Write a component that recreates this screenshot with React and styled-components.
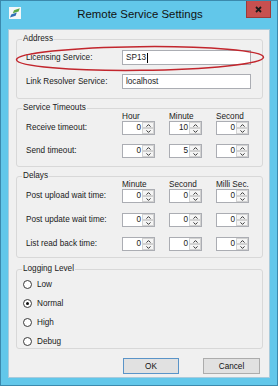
import React from "react";
import styled, { createGlobalStyle } from "styled-components";

const GlobalStyle = createGlobalStyle`
  html, body {
    margin: 0;
    padding: 0;
    background: #ffffff;
  }
  body {
    font-family: "Liberation Sans", Arial, sans-serif;
    color: #1a1a1a;
  }
`;

const Window = styled.div`
  width: 278px;
  height: 386px;
  box-sizing: border-box;
  border: 1px solid #3b89ad;
  background: #62c7ea;
  display: flex;
  flex-direction: column;
  padding: 0 7px 7px;
`;

const TitleBar = styled.div`
  height: 28px;
  flex-shrink: 0;
  margin: 0 -7px;
  padding: 0 6px 0 8px;
  display: grid;
  grid-template-columns: 1fr auto 1fr;
  align-items: start;
`;

const AppIcon = styled.svg`
  margin-top: 6px;
  display: block;
`;

const Title = styled.div`
  margin-top: 6px;
  font-size: 11.4px;
  line-height: 14px;
  color: #111;
  white-space: nowrap;
`;

const CloseButton = styled.div`
  justify-self: end;
  width: 25px;
  height: 17px;
  box-sizing: border-box;
  background: #c75050;
  border: 1px solid #9c3a3a;
  border-top: none;
  display: flex;
  align-items: center;
  justify-content: center;
`;

const Client = styled.div`
  position: relative;
  flex: 1;
  background: #f0f0f0;
  border: 1px solid #a9cbdc;
  padding: 4px 6px 3px 7px;
  display: flex;
  flex-direction: column;
`;

const Group = styled.fieldset`
  margin: ${(p) => p.$top || 0}px 0 0;
  padding: 0;
  border: 1px solid #d8d8d8;
  border-radius: 3px;
  min-width: 0;
`;

const Legend = styled.legend`
  margin-left: 5px;
  padding: 0 1px;
  font-size: 8.2px;
  line-height: 10px;
  color: #1a1a1a;
`;

const GroupBody = styled.div`
  padding: ${(p) => p.$pad};
`;

const FieldGrid = styled.div`
  display: grid;
  grid-template-columns: 96px 1fr;
  row-gap: 9px;
  align-items: center;
`;

const Label = styled.span`
  font-size: 8.2px;
  line-height: 10px;
  white-space: nowrap;
`;

const TextBox = styled.div`
  height: 15px;
  box-sizing: border-box;
  border: 1px solid #abadb3;
  background: #ffffff;
  padding: 0 3px;
  font-size: 8.2px;
  display: flex;
  align-items: center;
`;

const Caret = styled.span`
  width: 1px;
  height: 10px;
  background: #000;
  margin-left: 1px;
`;

const HeaderGrid = styled.div`
  display: grid;
  grid-template-columns: 82px repeat(3, 33px);
  column-gap: 14px;
  height: 8px;
  font-size: 8.2px;
  line-height: 8px;
  white-space: nowrap;
`;

const SpinGrid = styled.div`
  display: grid;
  grid-template-columns: 82px repeat(3, 33px);
  column-gap: 14px;
  row-gap: ${(p) => p.$gap}px;
  align-items: center;
`;

const Spin = styled.div`
  height: 14px;
  box-sizing: border-box;
  border: 1px solid #abadb3;
  background: #ffffff;
  display: flex;
`;

const SpinValue = styled.span`
  flex: 1;
  text-align: right;
  padding-right: 1px;
  font-size: 8.2px;
  line-height: 12px;
`;

const SpinButtons = styled.div`
  width: 12px;
  display: flex;
  flex-direction: column;
`;

const SpinButton = styled.div`
  flex: 1;
  box-sizing: border-box;
  border: 1px solid #d2d2d2;
  background: #f5f5f5;
  display: flex;
  align-items: center;
  justify-content: center;
`;

const RadioList = styled.div`
  display: flex;
  flex-direction: column;
  gap: 7px;
`;

const RadioRow = styled.div`
  height: 12px;
  display: flex;
  align-items: center;
  gap: 5px;
  font-size: 8.2px;
`;

const RadioDot = styled.span`
  width: 9px;
  height: 9px;
  box-sizing: border-box;
  border-radius: 50%;
  border: 1px solid #3a3a3a;
  background: #ffffff;
  display: flex;
  align-items: center;
  justify-content: center;

  &::after {
    content: "";
    width: 3px;
    height: 3px;
    border-radius: 50%;
    background: ${(p) => (p.$on ? "#111" : "transparent")};
  }
`;

const ButtonRow = styled.div`
  display: flex;
  justify-content: flex-end;
  gap: 24px;
  margin-top: 9px;
  padding-right: 3px;
`;

const Button = styled.button`
  width: ${(p) => p.$w}px;
  height: 16px;
  box-sizing: border-box;
  margin: 0;
  padding: 0;
  border: 1px solid ${(p) => (p.$primary ? "#5a94c8" : "#acacac")};
  background: #e1e1e1;
  font-family: inherit;
  font-size: 8.2px;
  color: #111;
`;

const Annotation = styled.svg`
  position: absolute;
  left: 6px;
  top: 15px;
  pointer-events: none;
`;

function Chevron({ up }) {
  return (
    <svg width="5" height="3" viewBox="0 0 5 3">
      <path
        d={up ? "M0.5 2.6 L2.5 0.6 L4.5 2.6" : "M0.5 0.4 L2.5 2.4 L4.5 0.4"}
        fill="none"
        stroke="#333"
        strokeWidth="1"
      />
    </svg>
  );
}

function SpinBox({ value }) {
  return (
    <Spin>
      <SpinValue>{value}</SpinValue>
      <SpinButtons>
        <SpinButton>
          <Chevron up />
        </SpinButton>
        <SpinButton>
          <Chevron />
        </SpinButton>
      </SpinButtons>
    </Spin>
  );
}

const timeouts = [
  { label: "Receive timeout:", values: [0, 10, 0] },
  { label: "Send timeout:", values: [0, 5, 0] },
];

const delays = [
  { label: "Post upload wait time:", values: [0, 0, 0] },
  { label: "Post update wait time:", values: [0, 0, 0] },
  { label: "List read back time:", values: [0, 0, 0] },
];

const levels = ["Low", "Normal", "High", "Debug"];

export default function App() {
  return (
    <>
      <GlobalStyle />
      <Window>
        <TitleBar>
          <AppIcon width="12" height="12" viewBox="0 0 12 12">
            <rect width="12" height="12" fill="#f3f7f9" />
            <path d="M5 3.2 L10.8 1.2 L9.6 4.4 L3.8 6.2 Z" fill="#5aa845" />
            <path d="M2.2 7.4 L7.8 5.6 L6.6 8.8 L1 10.6 Z" fill="#2f6fb5" />
          </AppIcon>
          <Title>Remote Service Settings</Title>
          <CloseButton>
            <svg width="7" height="7" viewBox="0 0 7 7">
              <path d="M1 1 L6 6 M6 1 L1 6" stroke="#1a1a1a" strokeWidth="1.8" />
            </svg>
          </CloseButton>
        </TitleBar>

        <Client>
          <Group>
            <Legend>Address</Legend>
            <GroupBody $pad="6px 11px 9px 9px">
              <FieldGrid>
                <Label>Licensing Service:</Label>
                <TextBox>
                  SP13
                  <Caret />
                </TextBox>
                <Label>Link Resolver Service:</Label>
                <TextBox>localhost</TextBox>
              </FieldGrid>
            </GroupBody>
          </Group>

          <Group $top={4}>
            <Legend>Service Timeouts</Legend>
            <GroupBody $pad="0 11px 8px 9px">
              <HeaderGrid>
                <span />
                <span>Hour</span>
                <span>Minute</span>
                <span>Second</span>
              </HeaderGrid>
              <SpinGrid $gap={9}>
                {timeouts.map((row) => (
                  <React.Fragment key={row.label}>
                    <Label>{row.label}</Label>
                    {row.values.map((v, i) => (
                      <SpinBox key={i} value={v} />
                    ))}
                  </React.Fragment>
                ))}
              </SpinGrid>
            </GroupBody>
          </Group>

          <Group $top={4}>
            <Legend>Delays</Legend>
            <GroupBody $pad="0 11px 6px 9px">
              <HeaderGrid>
                <span />
                <span>Minute</span>
                <span>Second</span>
                <span>Milli Sec.</span>
              </HeaderGrid>
              <SpinGrid $gap={10}>
                {delays.map((row) => (
                  <React.Fragment key={row.label}>
                    <Label>{row.label}</Label>
                    {row.values.map((v, i) => (
                      <SpinBox key={i} value={v} />
                    ))}
                  </React.Fragment>
                ))}
              </SpinGrid>
            </GroupBody>
          </Group>

          <Group $top={6}>
            <Legend>Logging Level</Legend>
            <GroupBody $pad="4px 8px 1px 6px">
              <RadioList>
                {levels.map((lvl) => (
                  <RadioRow key={lvl}>
                    <RadioDot $on={lvl === "Normal"} />
                    {lvl}
                  </RadioRow>
                ))}
              </RadioList>
            </GroupBody>
          </Group>

          <ButtonRow>
            <Button $w={56} $primary>
              OK
            </Button>
            <Button $w={57}>Cancel</Button>
          </ButtonRow>

          <Annotation width="250" height="27" viewBox="0 0 250 27">
            <ellipse
              cx="125"
              cy="13.5"
              rx="123.5"
              ry="11.8"
              fill="none"
              stroke="#c2262d"
              strokeWidth="1.5"
              transform="rotate(-0.6 125 13.5)"
            />
          </Annotation>
        </Client>
      </Window>
    </>
  );
}
